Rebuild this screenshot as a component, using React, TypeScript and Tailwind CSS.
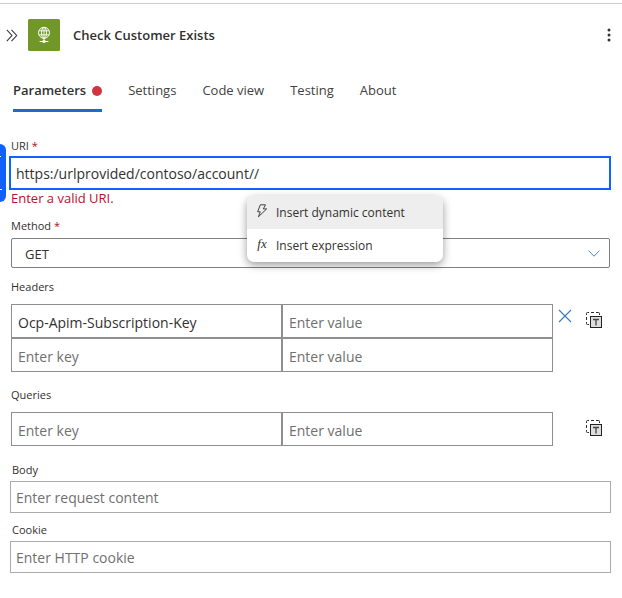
import { useState } from "react";

function HttpIcon() {
  return (
    <svg viewBox="0 0 32 32" className="size-8 shrink-0" aria-hidden="true">
      <rect width="32" height="32" rx="1.5" fill="#709727" />
      <g fill="none" stroke="#fff" strokeWidth="1">
        <circle cx="16" cy="13.8" r="5.5" />
        <ellipse cx="16" cy="13.8" rx="2.5" ry="5.5" />
        <path d="M11.2 11.8h9.6M11.2 15.8h9.6M16 8.2v11" strokeWidth="0.9" />
        <path d="M16 19v3.5M11.6 22.5h8.8" strokeWidth="1" />
      </g>
      <rect x="14.4" y="21.3" width="3.2" height="2.4" rx="0.6" fill="#fff" />
    </svg>
  );
}

function CollapseIcon() {
  return (
    <svg viewBox="0 0 12 13" className="h-[13px] w-3" fill="none" stroke="#3a3a3a" strokeWidth="1.1" aria-hidden="true">
      <path d="M0.8 0.8 6 6.5 0.8 12.2M5.5 0.8l5.2 5.7-5.2 5.7" />
    </svg>
  );
}

function MoreIcon() {
  return (
    <svg viewBox="0 0 4 14" className="h-[14px] w-1" fill="#333" aria-hidden="true">
      <circle cx="2" cy="2" r="1.5" />
      <circle cx="2" cy="7" r="1.5" />
      <circle cx="2" cy="12" r="1.5" />
    </svg>
  );
}

function TextModeIcon() {
  return (
    <svg viewBox="0 0 16 16" className="size-4" fill="none" aria-hidden="true">
      <path d="M.5 3V1.500Q.5.500 1.500.500H3M5 .500h3M10 .500h2.500q1 0 1 1V3M.500 5v3M.500 10v1.500q0 1 1 1H3" stroke="#2a2a2a" />
      <rect x="4.500" y="4.500" width="11" height="11" fill="#dedede" stroke="#222" />
      <path d="M7 7.500h6M10 7.500v6" stroke="#444" strokeWidth="1.300" />
    </svg>
  );
}

function DismissIcon() {
  return (
    <svg viewBox="0 0 14 14" className="size-[14px]" fill="none" stroke="#3a7cc4" strokeWidth="1.2" aria-hidden="true">
      <path d="M1 1l12 12M13 1L1 13" />
    </svg>
  );
}

function BoltIcon() {
  return (
    <svg viewBox="0 0 12 14" className="h-[14px] w-3" fill="none" stroke="#444" strokeLinejoin="round" aria-hidden="true">
      <path d="M4.3.8h5.2L7.3 4.9h3.4L2.4 12.8l1.9-5H1.6z" />
    </svg>
  );
}

const tabs = ["Parameters", "Settings", "Code view", "Testing", "About"];

const cell =
  "h-[34px] w-full min-w-0 border border-[#8f8f8f] bg-white px-[6px] pt-[2px] text-[14px] text-[#323130] outline-none placeholder:text-[#707070]";
const field =
  "block h-8 w-full border border-[#ababab] bg-white px-[5px] text-[14px] text-[#323130] outline-none placeholder:text-[#707070]";
const label = "block px-[2px] text-[11px] leading-4 text-[#323130]";

function Required() {
  return <span className="text-[#b10e1c]"> *</span>;
}

function PairRow({ name, defaultKey = "" }: { name: string; defaultKey?: string }) {
  return (
    <div className="grid grid-cols-2">
      <input className={cell} aria-label={`${name} key`} placeholder="Enter key" defaultValue={defaultKey} />
      <input className={cell} aria-label={`${name} value`} placeholder="Enter value" />
    </div>
  );
}

export default function App() {
  const [active, setActive] = useState("Parameters");

  return (
    <main className="relative min-h-screen bg-white pt-[3px] font-['Open_Sans','Noto_Sans',sans-serif] text-[#323130]">
      <div className="absolute top-36 left-0 flex h-[58px] w-[6px] flex-col justify-between rounded-r-[6px] bg-[#0f62fe] py-3" aria-hidden="true">
        <span className="h-px w-px bg-white" />
        <span className="h-px w-[2px] bg-white" />
      </div>

      <header className="flex items-center border-t border-[#cfcfcf] pt-[15px] pr-[11px] pl-[6px]">
        <button type="button" aria-label="Collapse panel" className="mr-[10px]">
          <CollapseIcon />
        </button>
        <HttpIcon />
        <h1 className="ml-[13px] flex-1 text-[13px] leading-5 font-semibold">Check Customer Exists</h1>
        <button type="button" aria-label="More options">
          <MoreIcon />
        </button>
      </header>

      <div role="tablist" className="mt-[25px] flex gap-[26px] px-[13px]">
        {tabs.map((tab) => (
          <button
            key={tab}
            type="button"
            role="tab"
            aria-selected={active === tab}
            onClick={() => setActive(tab)}
            className={
              active === tab
                ? "flex h-9 items-center gap-[6px] border-b-3 border-[#1b6ec2] pb-1 text-[13px] font-semibold"
                : "flex h-9 items-center border-b-3 border-transparent pb-1 text-[13px] text-[#424242]"
            }
          >
            {tab}
            {tab === "Parameters" && <span className="size-[10px] rounded-full bg-[#d13440]" />}
          </button>
        ))}
      </div>

      <form className="mt-[26px] pr-[11px] pl-[9px]">
        <div className="relative">
          <label htmlFor="uri" className={label}>
            URI
            <Required />
          </label>
          <input
            id="uri"
            defaultValue="https:/urlprovided/contoso/account//"
            aria-describedby="uri-error"
            className="mt-[2px] block h-[34px] w-full border-2 border-[#0f62fe] px-[5px] text-[14px] outline-none"
          />
          <p id="uri-error" className="px-[2px] text-[13px] leading-4 text-[#b7102f]">
            Enter a valid URI.
          </p>

          <div
            role="menu"
            className="absolute top-[58px] left-[238px] z-10 w-[196px] overflow-hidden rounded-[7px] bg-white text-[12px] shadow-[0_3px_9px_rgba(0,0,0,0.4)]"
          >
            <button type="button" role="menuitem" className="flex h-[33px] w-full items-center gap-2 bg-[#eeeeee] pl-[9px]">
              <span className="pb-1">
                <BoltIcon />
              </span>
              Insert dynamic content
            </button>
            <button type="button" role="menuitem" className="flex h-[33px] w-full items-center gap-2 pl-[9px]">
              <span className="w-3 pb-1 font-['Liberation_Serif',serif] text-[13px] italic" aria-hidden="true">
                fx
              </span>
              Insert expression
            </button>
          </div>
        </div>

        <div className="mt-3 pr-px">
          <label htmlFor="method" className={label}>
            Method
            <Required />
          </label>
          <div className="relative mt-1 ml-[2px]">
            <select
              id="method"
              className="block h-[30px] w-full appearance-none rounded-[2px] border border-[#808080] bg-white pt-[3px] pl-[13px] text-[13px] outline-none"
            >
              <option>GET</option>
              <option>POST</option>
            </select>
            <svg viewBox="0 0 12 7" className="pointer-events-none absolute top-3 right-[10px] h-[7px] w-3" fill="none" stroke="#4b83b8" aria-hidden="true">
              <path d="M.5.6 6 6.2 11.5.6" />
            </svg>
          </div>
        </div>

        <section className="mt-[11px]">
          <h2 className={label}>Headers</h2>
          <div className="mt-[9px] flex pl-[2px]">
            <div className="flex-1">
              <PairRow name="Header" defaultKey="Ocp-Apim-Subscription-Key" />
              <PairRow name="Second header" />
            </div>
            <div className="flex w-[58px] items-start justify-between pr-[9px] pl-[5px]">
              <button type="button" aria-label="Delete header" className="mt-[5px]">
                <DismissIcon />
              </button>
              <button type="button" aria-label="Switch headers to text mode" className="mt-2">
                <TextModeIcon />
              </button>
            </div>
          </div>
        </section>

        <section className="mt-[15px]">
          <h2 className={label}>Queries</h2>
          <div className="mt-[9px] flex pl-[2px]">
            <div className="flex-1">
              <PairRow name="Query" />
            </div>
            <div className="flex w-[58px] items-start justify-end pr-[9px]">
              <button type="button" aria-label="Switch queries to text mode" className="mt-2">
                <TextModeIcon />
              </button>
            </div>
          </div>
        </section>

        <div className="mt-4 pl-px">
          <label htmlFor="body" className={label}>
            Body
          </label>
          <input id="body" className={`${field} mt-[3px]`} placeholder="Enter request content" />
        </div>
        <div className="mt-[9px] pl-px">
          <label htmlFor="cookie" className={label}>
            Cookie
          </label>
          <input id="cookie" className={`${field} mt-[3px]`} placeholder="Enter HTTP cookie" />
        </div>
      </form>
    </main>
  );
}
